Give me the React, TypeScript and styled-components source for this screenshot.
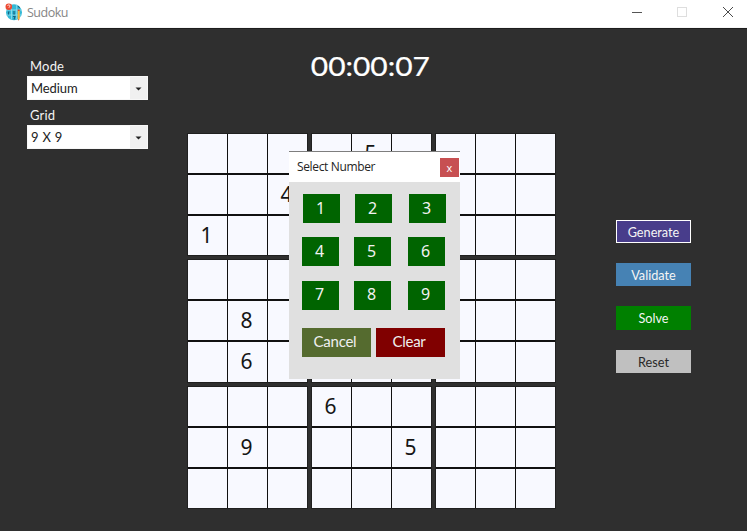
import React from "react";
import styled, { createGlobalStyle } from "styled-components";

const GlobalStyle = createGlobalStyle`
  * { box-sizing: border-box; }
  body { margin: 0; background: #2f2f2f; }
  button { padding: 0; margin: 0; border: 0; font: inherit; }
`;

const Window = styled.div`
  position: relative;
  width: 747px;
  height: 531px;
  overflow: hidden;
  display: flex;
  flex-direction: column;
  background: #2f2f2f;
  color: #f4f4f4;
  font-family: Lato, "Open Sans", sans-serif;
`;

const TitleBar = styled.header`
  height: 28px;
  flex: none;
  display: flex;
  align-items: flex-start;
  background: #fff;
  border-bottom: 1px solid #f6f6f6;
  padding-left: 5px;
`;

const AppIcon = styled.svg`
  width: 18px;
  height: 19px;
  margin-top: 3px;
`;

const AppName = styled.span`
  margin: 4px 0 0 4px;
  font: 12.5px/18px "Open Sans", sans-serif;
  letter-spacing: -0.5px;
  color: #858585;
  flex: 1;
`;

const Controls = styled.svg`
  width: 124px;
  height: 27px;
  fill: none;
  shape-rendering: crispEdges;
`;

const Content = styled.main`
  display: grid;
  grid-template-columns: 188px 367px 192px;
  flex: 1;
  border-top: 1px solid #1d1d1d;
`;

const Settings = styled.aside`
  padding: 28px 0 0 27px;
  width: 148px;
`;

const Field = styled.div`
  height: 49px;
  display: flex;
  flex-direction: column;
`;

const FieldLabel = styled.label`
  height: 19px;
  padding-left: 3px;
  font-size: 13px;
  line-height: 18px;
  letter-spacing: 0.2px;
`;

const Select = styled.div`
  height: 24px;
  display: flex;
  align-items: stretch;
  background: #fff;
  border: 1px solid #f7f7f7;
  color: #222;
  font-size: 13px;
  line-height: 23px;
`;

const SelectValue = styled.span<{ $spacing: number }>`
  flex: 1;
  padding-left: 3px;
  letter-spacing: ${(p) => p.$spacing}px;
`;

const SelectArrow = styled.svg`
  width: 17px;
  height: 22px;
  background: #f0f0f0;
  fill: #222;
`;

const Center = styled.section`
  display: flex;
  flex-direction: column;
`;

const Timer = styled.div`
  height: 105px;
  padding-top: 18px;
  padding-right: 2px;
  text-align: center;
  font-size: 26.5px;
  line-height: 38px;
  color: #fff;
  -webkit-text-stroke: 0.2px #fff;
  transform: scaleX(1.13);
`;

const Board = styled.div`
  width: 367px;
  display: grid;
  grid-template-columns: repeat(3, 119px);
  grid-template-rows: 121px 122px 121px;
  gap: 5px;
`;

const Block = styled.div`
  display: grid;
  grid-template-columns: repeat(3, 39px);
  grid-template-rows: 39px 39px 1fr;
  gap: 2px 1px;
  background: #111;
  box-shadow: 0 0 0 1px #202020;
`;

const Cell = styled.div`
  background: #f8f9ff;
  color: #151515;
  font: 21px/39px "Noto Sans", sans-serif;
  text-align: center;
  padding-right: 2px;
`;

const Actions = styled.aside`
  padding: 191px 0 0 61px;
  display: flex;
  flex-direction: column;
  gap: 20px;
`;

const ActionButton = styled.button<{ $bg: string; $fg?: string; $edge?: string }>`
  width: 75px;
  height: 23.2px;
  padding: 2px 0 0;
  background: ${(p) => p.$bg};
  color: ${(p) => p.$fg ?? "#f5f5f5"};
  border: 1px solid ${(p) => p.$edge ?? p.$bg};
  font-size: 12.7px;
  line-height: 19px;
  letter-spacing: 0;
`;

const Dialog = styled.div`
  position: absolute;
  left: 289px;
  top: 151px;
  width: 171px;
  height: 228px;
  background: #e0e0e0;
`;

const DialogTitle = styled.div`
  height: 31px;
  display: flex;
  justify-content: space-between;
  background: #fff;
  border-top: 1px solid #7e7e7e;
  padding: 0 1px 0 8px;
  color: #242424;
  font: 12px/30px "Open Sans", sans-serif;
  letter-spacing: -0.35px;
`;

const CloseButton = styled.button`
  width: 19px;
  height: 19px;
  margin-top: 6px;
  background: #c75052;
  color: #fff;
  font: 11px/16px "Open Sans", sans-serif;
`;

const Keypad = styled.div`
  padding: 12px 0 0 13px;
  display: flex;
  flex-direction: column;
  gap: 14.4px;
`;

const KeyRow = styled.div<{ $shift?: boolean }>`
  display: grid;
  grid-template-columns: 37px 37px 37px;
  column-gap: 15px;
  padding-left: ${(p) => (p.$shift ? 1 : 0)}px;
  & > :nth-child(3) { margin-left: 2px; margin-right: -2px; }
`;

const Key = styled.button`
  height: 29px;
  background: #006400;
  color: #f2f2f2;
  font: 16px/26px "Noto Sans", sans-serif;
  padding: 0 2px 2px 0;
`;

const DialogActions = styled.div`
  display: flex;
  gap: 5px;
  padding: 18px 0 0 13px;
`;

const DialogButton = styled.button<{ $bg: string }>`
  width: 69px;
  height: 29px;
  padding: 0 3px 1px 0;
  background: ${(p) => p.$bg};
  color: #efefef;
  font-size: 15px;
  line-height: 27px;
  letter-spacing: -0.25px;
`;

const DIGITS: Record<string, number> = {
  "0-4": 5,
  "1-2": 4,
  "2-0": 1,
  "4-1": 8,
  "5-1": 6,
  "6-3": 6,
  "7-1": 9,
  "7-5": 5,
};

const NINE = [0, 1, 2, 3, 4, 5, 6, 7, 8];

function SudokuBlock({ index }: { index: number }) {
  return (
    <Block>
      {NINE.map((i) => {
        const row = Math.floor(index / 3) * 3 + Math.floor(i / 3);
        const col = (index % 3) * 3 + (i % 3);
        return <Cell key={i}>{DIGITS[`${row}-${col}`]}</Cell>;
      })}
    </Block>
  );
}

function Dropdown({ label, value, spacing }: { label: string; value: string; spacing: number }) {
  return (
    <Field>
      <FieldLabel>{label}</FieldLabel>
      <Select>
        <SelectValue $spacing={spacing}>{value}</SelectValue>
        <SelectArrow viewBox="0 0 17 22"><path d="M5.500 10.500h6L8.500 13.500z" /></SelectArrow>
      </Select>
    </Field>
  );
}

export default function App() {
  return (
    <Window>
      <GlobalStyle />
      <TitleBar>
        <AppIcon viewBox="0 0 18 19">
          <circle cx="9" cy="9.300" r="8" fill="#35b9d6" />
          <path d="M1.500 7h15M1.500 12h15M6.500 2v14.500M11.700 2v14.500" stroke="#8bdcec" strokeWidth="0.900" />
          <path d="M3.500 8.500v3M3 9h1.500M9 8v3M8.300 11h1.500M8 13.500h2l-1 3M13 3l1.700 2" stroke="#17617e" strokeWidth="1.100" fill="none" />
          <circle cx="3.800" cy="3.800" r="3.300" fill="#ed4931" />
          <path d="M2.600 3c.2-1.600 2.600-1.300 2.400.1-.1.900-1.100.7-1.100 1.700" stroke="#fff" strokeWidth="0.800" fill="none" />
          <path d="M12.700 7.500h2v8l-1 2-1-2z" fill="#fbb12f" />
          <path d="M12.700 6.500h2v1.500h-2zM13 16.200h1.400l-.7 1.600z" fill="#d64b32" />
        </AppIcon>
        <AppName>Sudoku</AppName>
        <Controls viewBox="0 0 124 27">
          <path d="M9 12.500h10" stroke="#555" />
          <path d="M54.500 7.500h9v9h-9z" stroke="#dedede" />
          <path d="M100 7l10 10M110 7l-10 10" stroke="#4b4b4b" shapeRendering="auto" />
        </Controls>
      </TitleBar>
      <Content>
        <Settings>
          <Dropdown label="Mode" value="Medium" spacing={-0.1} />
          <Dropdown label="Grid" value="9 X 9" spacing={0.3} />
        </Settings>
        <Center>
          <Timer>00:00:07</Timer>
          <Board>
            {NINE.map((i) => <SudokuBlock key={i} index={i} />)}
          </Board>
        </Center>
        <Actions>
          <ActionButton $bg="#483d8b" $edge="#ffffff">Generate</ActionButton>
          <ActionButton $bg="#4682b4">Validate</ActionButton>
          <ActionButton $bg="#008000">Solve</ActionButton>
          <ActionButton $bg="#c0c0c0" $fg="#292929">Reset</ActionButton>
        </Actions>
      </Content>
      <Dialog role="dialog">
        <DialogTitle>
          <span>Select Number</span>
          <CloseButton>x</CloseButton>
        </DialogTitle>
        <Keypad>
          {[0, 3, 6].map((start) => (
            <KeyRow key={start} $shift={start === 0}>
              {[1, 2, 3].map((n) => <Key key={n}>{start + n}</Key>)}
            </KeyRow>
          ))}
        </Keypad>
        <DialogActions>
          <DialogButton $bg="#556b2f">Cancel</DialogButton>
          <DialogButton $bg="#800000">Clear</DialogButton>
        </DialogActions>
      </Dialog>
    </Window>
  );
}
